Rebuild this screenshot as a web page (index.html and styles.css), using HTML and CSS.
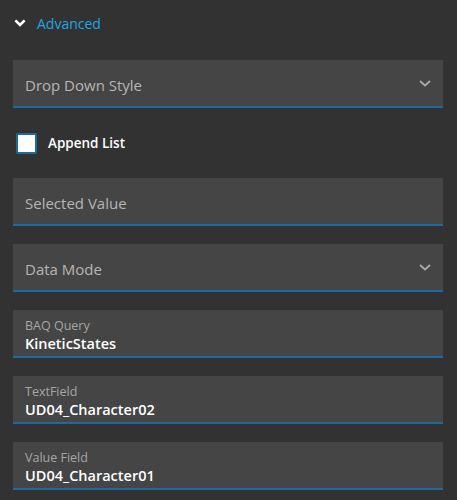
FILE: index.html
```html
<!DOCTYPE html>
<html lang="en">
<head>
  <meta charset="UTF-8">
  <meta name="viewport" content="width=device-width, initial-scale=1.0">
  <title>Advanced</title>
  <link rel="stylesheet" href="styles.css">
</head>
<body>
  <div class="panel">
    <div class="section-header">
      <svg class="section-chevron" width="12" height="8" viewBox="0 0 12 8">
        <path d="M1.3 1.3 L6 6 L10.7 1.3" fill="none" stroke="#fff" stroke-width="2.6"/>
      </svg>
      <span>Advanced</span>
    </div>

    <div class="field select">
      <span class="placeholder">Drop Down Style</span>
      <svg class="select-arrow" width="12" height="7" viewBox="0 0 12 7">
        <path d="M1 1 L6 5.5 L11 1" fill="none" stroke="#a9a9a9" stroke-width="1.8"/>
      </svg>
    </div>

    <label class="checkbox-row">
      <span class="checkbox"></span>
      <span class="checkbox-label">Append List</span>
    </label>

    <div class="field">
      <span class="placeholder">Selected Value</span>
    </div>

    <div class="field select">
      <span class="placeholder">Data Mode</span>
      <svg class="select-arrow" width="12" height="7" viewBox="0 0 12 7">
        <path d="M1 1 L6 5.5 L11 1" fill="none" stroke="#a9a9a9" stroke-width="1.8"/>
      </svg>
    </div>

    <div class="field filled">
      <span class="field-label">BAQ Query</span>
      <span class="field-value">KineticStates</span>
    </div>

    <div class="field filled">
      <span class="field-label">TextField</span>
      <span class="field-value">UD04_Character02</span>
    </div>

    <div class="field filled">
      <span class="field-label">Value Field</span>
      <span class="field-value">UD04_Character01</span>
    </div>
  </div>
</body>
</html>
```

FILE: styles.css
```css
body {
  margin: 0;
  background: #323232;
  font-family: 'Open Sans', 'Noto Sans', sans-serif;
  color: #fff;
}

.panel {
  padding: 12px 14px 10px 13px;
  display: flex;
  flex-direction: column;
}

.section-header {
  display: flex;
  align-items: center;
  height: 22px;
  color: #1ea6e3;
  font-size: 14px;
}

.section-chevron {
  margin: 0 11px 0 1px;
}

.field {
  box-sizing: border-box;
  height: 48px;
  background: #454545;
  border-bottom: 2px solid #1a6b9e;
  padding: 0 12px;
  display: flex;
  align-items: center;
  margin-bottom: 18px;
}

.section-header + .field {
  margin-top: 26px;
}

.select {
  justify-content: space-between;
}

.placeholder {
  font-size: 15px;
  color: #b5b5b5;
  padding-top: 4px;
}

.filled {
  flex-direction: column;
  align-items: flex-start;
  justify-content: center;
  padding-top: 6px;
}

.field-label {
  font-size: 12.5px;
  color: #a6a6a6;
  line-height: 16px;
}

.field-value {
  font-size: 14.5px;
  font-weight: 600;
  color: #fff;
  line-height: 20px;
}

.checkbox-row {
  display: flex;
  align-items: center;
  height: 22px;
  margin: 6px 0 24px 3px;
}

.checkbox {
  box-sizing: border-box;
  width: 21px;
  height: 21px;
  background: #fff;
  border: 2px solid #1a6b9e;
  border-radius: 2px;
  margin-right: 11px;
}

.checkbox-label {
  font-size: 13.5px;
  font-weight: 600;
}
```
